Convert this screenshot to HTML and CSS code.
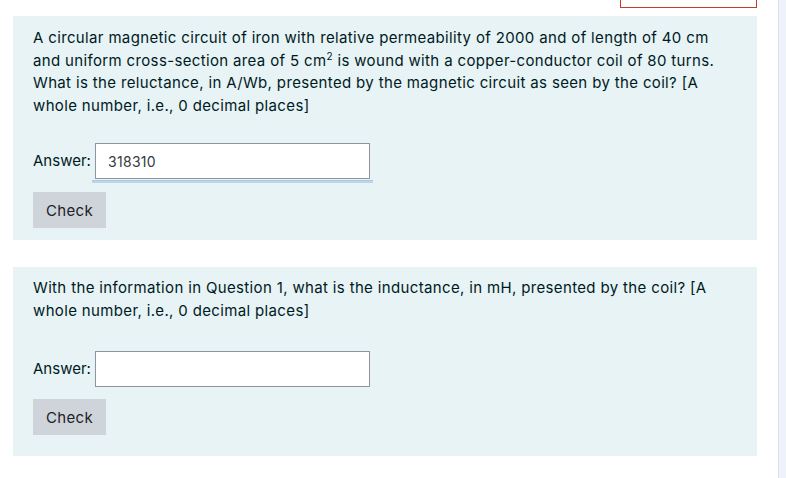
FILE: index.html
```html
<!DOCTYPE html>
<html>
<head>
<meta charset="utf-8">
<link rel="stylesheet" href="styles.css">
</head>
<body>
<div class="page">
  <main class="main">
    <div class="topbar"><div class="navbox"></div></div>
    <section class="formulation first">
      <div class="qtext">A circular magnetic circuit of iron with relative permeability of 2000 and of length of 40 cm<br>and uniform cross-section area of 5 cm<sup>2</sup> is wound with a copper-conductor coil of 80 turns.<br>What is the reluctance, in A/Wb, presented by the magnetic circuit as seen by the coil? [A<br>whole number, i.e., 0 decimal places]</div>
      <div class="answer a1">
        <label class="label">Answer:</label>
        <span class="field focused"><input class="input" type="text" value="318310"></span>
      </div>
      <button class="check b1">Check</button>
    </section>
    <section class="formulation second">
      <div class="qtext">With the information in Question 1, what is the inductance, in mH, presented by the coil? [A<br>whole number, i.e., 0 decimal places]</div>
      <div class="answer a2">
        <label class="label">Answer:</label>
        <span class="field"><input class="input" type="text" value=""></span>
      </div>
      <button class="check b2">Check</button>
    </section>
  </main>
  <aside class="side"></aside>
</div>
</body>
</html>
```
FILE: styles.css
```css
html, body {
  margin: 0;
  padding: 0;
  background: #ffffff;
}
body {
  font-family: Inter, "Open Sans", sans-serif;
  font-size: 15px;
  line-height: 22.5px;
  letter-spacing: 0.35px;
  color: #001a1e;
}
.page {
  display: flex;
  width: 786px;
  height: 478px;
  overflow: hidden;
}
.main {
  width: 778px;
  box-sizing: border-box;
  padding: 0 21px 0 13px;
  flex: none;
}
.side {
  flex: 1;
  border-left: 1px solid #dde2e6;
  background: #edf3f8;
}
.topbar {
  display: flex;
  justify-content: flex-end;
  height: 8px;
}
.navbox {
  width: 135px;
  height: 7px;
  border: 1px solid #c93a2c;
  border-top: none;
  background: #fff;
}
.formulation {
  background: #e7f3f5;
  padding: 0 20px;
  display: flex;
  flex-direction: column;
  align-items: flex-start;
}
.first {
  margin-top: 8px;
  padding-top: 11px;
  padding-bottom: 12px;
}
.second {
  margin-top: 27px;
  padding-top: 10px;
  padding-bottom: 21px;
}
.qtext {
  white-space: nowrap;
}
.qtext sup {
  font-size: 10px;
  line-height: 0;
  vertical-align: 6px;
}
.answer {
  display: flex;
  align-items: center;
  gap: 4px;
}
.a1 { margin-top: 26px; }
.a2 { margin-top: 29px; }
.label {
  width: 58px;
  white-space: nowrap;
  letter-spacing: 0;
}
.field {
  position: relative;
  display: block;
}
.focused::after {
  content: "";
  position: absolute;
  left: -3px;
  right: -3px;
  bottom: -4px;
  height: 2px;
  background: #bcd6ec;
  border-top: 1px solid #a9c9e6;
}
.input {
  display: block;
  box-sizing: border-box;
  width: 275px;
  height: 36px;
  margin: 0;
  border: 1px solid #8f959e;
  background: #fff;
  padding: 0 12px;
  font-family: Inter, "Open Sans", sans-serif;
  font-size: 14px;
  letter-spacing: 0.3px;
  color: #343a40;
  outline: none;
}
.check {
  width: 73px;
  height: 36px;
  border: none;
  background: #ced4da;
  color: #1d2125;
  font-family: Inter, "Open Sans", sans-serif;
  font-size: 15px;
  letter-spacing: 0.35px;
  padding: 0;
  margin: 0;
}
.b1 { margin-top: 13px; }
.b2 { margin-top: 12px; }
```
